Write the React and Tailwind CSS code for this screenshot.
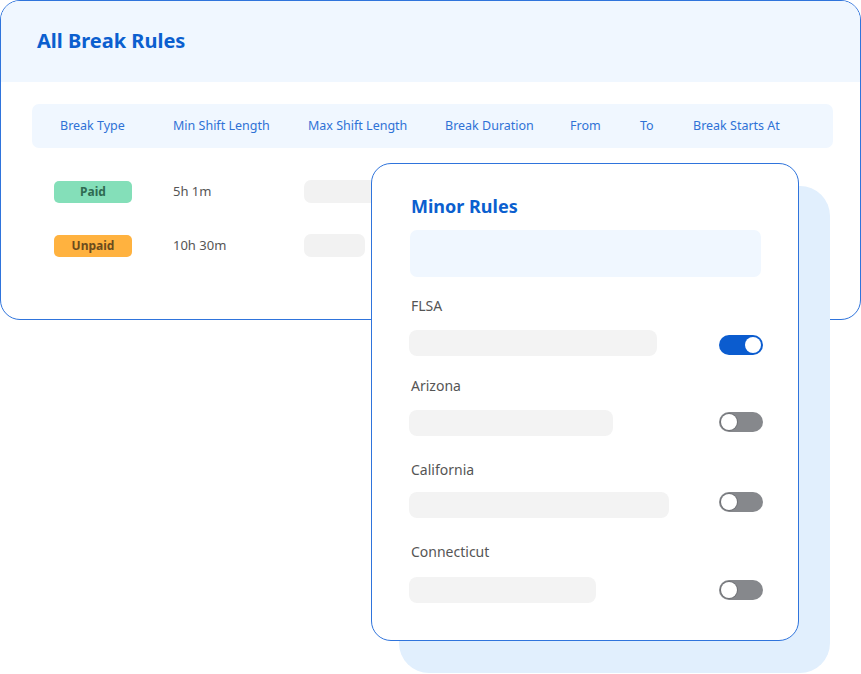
import React from 'react';

const font = { fontFamily: '"Noto Sans", "Open Sans", sans-serif' };

const columns = ['Break Type', 'Min Shift Length', 'Max Shift Length', 'Break Duration', 'From', 'To', 'Break Starts At'];

const rows = [
  { type: 'Paid', badge: 'bg-[#84dfb9] text-[#2f6b52]', min: '5h 1m', bar: 'w-[80px]' },
  { type: 'Unpaid', badge: 'bg-[#ffb23f] text-[#6b4b1d]', min: '10h 30m', bar: 'w-[61px]' },
];

// spacing per rule is a bit uneven in the mock, keep it
const rules = [
  { name: 'FLSA', width: 'w-[248px]', on: true, barTop: 'mt-[14px]', toggleTop: 'mt-[5px]', next: 'mb-[20px]' },
  { name: 'Arizona', width: 'w-[204px]', on: false, barTop: 'mt-[14px]', toggleTop: 'mt-[2px]', next: 'mb-[24px]' },
  { name: 'California', width: 'w-[260px]', on: false, barTop: 'mt-[12px]', toggleTop: 'mt-[0px]', next: 'mb-[24px]' },
  { name: 'Connecticut', width: 'w-[187px]', on: false, barTop: 'mt-[15px]', toggleTop: 'mt-[3px]', next: '' },
];

const grid = 'grid grid-cols-[141px_135px_137px_125px_70px_53px_1fr] items-center';

const Toggle = ({ on }) => (
  <div className={`flex h-[20px] w-[44px] items-center rounded-full px-[2px] ${on ? 'justify-end bg-[#0b5ccf]' : 'justify-start bg-[#86888c]'}`}>
    <div className={`h-[16px] w-[16px] rounded-full bg-white ${on ? '' : 'ring-1 ring-[#6f7175]'}`} />
  </div>
);

export default function App() {
  return (
    <div className="relative h-[674px] w-[861px] overflow-hidden bg-white" style={font}>
      {/* Break rules table card */}
      <div className="h-[320px] w-[861px] overflow-hidden rounded-[20px] border border-[#2f74dc] bg-white">
        <div className="flex h-[81px] items-center bg-[#f0f7ff] pl-[36px] pb-[2px]">
          <h1 className="text-[20px] font-bold text-[#0b5fcf]">All Break Rules</h1>
        </div>
        <div className="ml-[31px] mr-[27px] mt-[22px]">
          <div className={`${grid} h-[44px] rounded-[7px] bg-[#f0f7ff] text-[12.5px] text-[#2f72d6]`}>
            {columns.map((c, i) => (
              <span key={c} className={i === 0 ? 'pl-[28px]' : ''}>{c}</span>
            ))}
          </div>
          <div className="mt-[32px] flex flex-col gap-[32px]">
            {rows.map((r) => (
              <div key={r.type} className={`${grid} h-[22px]`}>
                <div className="pl-[22px]">
                  <span className={`flex h-[22px] w-[78px] items-center justify-center rounded-[5px] text-[12px] font-bold ${r.badge}`}>{r.type}</span>
                </div>
                <span className="text-[13px] text-[#555]">{r.min}</span>
                <div className={`-ml-[4px] h-[23px] rounded-[7px] bg-[#f2f2f2] ${r.bar}`} />
              </div>
            ))}
          </div>
        </div>
      </div>

      {/* backdrop card */}
      <div className="absolute left-[399px] top-[186px] h-[487px] w-[431px] rounded-[30px] bg-[#e1effd]" />

      {/* Minor rules card */}
      <div className="absolute left-[371px] top-[163px] h-[478px] w-[428px] rounded-[20px] border border-[#2f74dc] bg-white pl-[37px] pr-[37px] pt-[30px]">
        <h2 className="pl-[2px] text-[18px] font-bold leading-[24px] text-[#0b5fcf]">Minor Rules</h2>
        <div className="ml-[1px] mt-[12px] h-[47px] rounded-[7px] bg-[#f0f7ff]" />
        <div className="mt-[19px] flex flex-col">
          {rules.map((r) => (
            <div key={r.name} className={r.next}>
              <div className="pl-[2px] text-[14px] leading-[20px] text-[#555]">{r.name}</div>
              <div className={`flex items-start justify-between ${r.barTop}`}>
                <div className={`h-[26px] rounded-[8px] bg-[#f3f3f3] ${r.width}`} />
                <div className={`-mr-[2px] ${r.toggleTop}`}>
                  <Toggle on={r.on} />
                </div>
              </div>
            </div>
          ))}
        </div>
      </div>
    </div>
  );
}
